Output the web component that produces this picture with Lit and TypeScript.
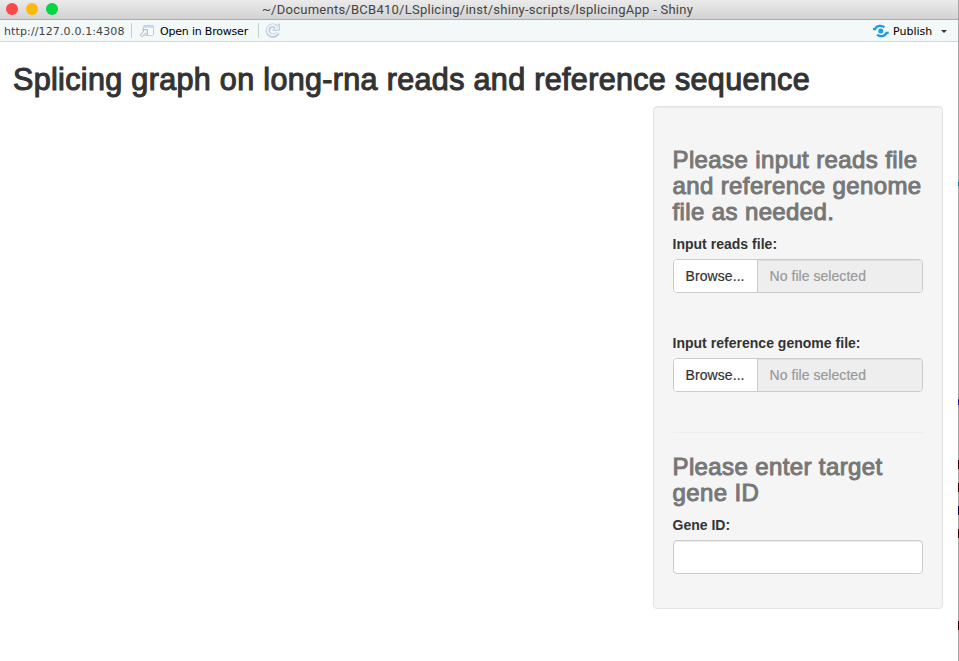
import { LitElement, html, css, svg } from "lit";
import { customElement, property } from "lit/decorators.js";

@customElement("file-field")
class FileField extends LitElement {
  @property() label = "";
  static styles = css`
    :host { display: block; height: 99px; }
    .label { font-weight: 700; height: 20px; line-height: 20px; margin-bottom: 5px; letter-spacing: 0.02px; text-indent: -.5px; }
    .group { display: flex; height: 34px; box-sizing: border-box; border: 1px solid #ccc; border-radius: 4px; overflow: hidden; line-height: 32px; }
    .browse { width: 84px; box-sizing: border-box; padding-left: 11.5px; background: #fff; border-right: 1px solid #ccc; letter-spacing: 0.08px; -webkit-text-stroke: .2px #333; }
    .name { flex: 1; padding-left: 11.5px; background: #eee; color: #999; letter-spacing: 0.05px; -webkit-text-stroke: .2px #999; box-shadow: inset 0 1px 1px rgba(0,0,0,.075); }
  `;
  render() {
    return html`<div class="label">${this.label}</div>
      <div class="group"><div class="browse">Browse...</div><div class="name">No file selected</div></div>`;
  }
}

const newWindowIcon = svg`
  <rect x="4.5" y="1.5" width="10" height="10" rx="1" fill="#f7fbfd" stroke="#bccddc"/>
  <path d="M4.5 2.7H14.5" stroke="#bcdcf4" stroke-width="2.2"/>
  <path d="M3.2 5.5H8.5V10.8L6.8 9.2L3 12.8L1 10.8L4.8 7.1Z" fill="#eef2f6" stroke="#a9b5c2" stroke-width=".9"/>`;
const reloadIcon = svg`
  <path d="M11.3 4A5 5 0 1 0 12.4 9.6" fill="none" stroke="#b7c4d8" stroke-width="4.4"/>
  <path d="M14.3 .9V7.3H7.8L10 5Z" fill="#e8eff8" stroke="#b7c4d8" stroke-width=".9"/>
  <path d="M11.8 4.6A5 5 0 1 0 12 9.4" fill="none" stroke="#e8eff8" stroke-width="2.4"/>`;
const publishIcon = svg`
  <circle cx="7.8" cy="7" r="2.5" fill="#1f9bea"/>
  <path d="M0 5.2H2C3.6 1.4 8.6 .8 11.4 3.4M15.6 8.8H13.6C12 12.6 7 13.2 4.2 10.6" fill="none" stroke="#1f9bea" stroke-width="2.3"/>`;

@customElement("app-root")
class AppRoot extends LitElement {
  static styles = css`
    :host { display: flex; width: 959px; height: 661px; overflow: hidden; background: #fff; font: 14px/20px "Liberation Sans", Arial, sans-serif; color: #333; }
    .window { width: 958px; display: flex; flex-direction: column; }
    .titlebar { height: 19px; flex: none; display: grid; grid-template-columns: 262px 1fr; align-items: center; background: linear-gradient(#ebebeb, #d2d2d2); border-bottom: 1px solid #adadad; }
    .lights { display: flex; gap: 8px; padding-left: 6px; margin-top: -1px; }
    .light { width: 12px; height: 12px; border-radius: 50%; }
    .red { background: #fc4848; } .amber { background: #fdb90b; } .green { background: #04d543; }
    .path { font: 13px/18px Roboto, sans-serif; letter-spacing: .255px; color: #444; white-space: nowrap; }
    .toolbar { height: 21px; flex: none; display: flex; align-items: center; background: #f3f8f9; border-bottom: 1px solid #d2d8db; font: 11px/18px "DejaVu Sans", sans-serif; color: #000; white-space: nowrap; }
    .toolbar span { padding-top: 2px; }
    .toolbar .url { width: 127px; padding-left: 4px; color: #444; letter-spacing: .13px; }
    .sep { width: 1px; height: 15px; background: #c8cdd0; }
    .open { width: 98px; margin-left: 4px; letter-spacing: -.2px; }
    .grow { flex: 1; }
    .publish { margin-left: 4px; width: 48px; }
    .caret { border: 3px solid transparent; border-top-color: #333; border-bottom: 0; margin-right: 11px; margin-top: 1px; }
    .ico { display: block; flex: none; }
    .new-window { margin-left: 7px; }
    .reload { margin-left: 6px; }
    .page { padding: 21px 15px 0 13px; }
    h1, h2 { margin: 0; font-weight: 400; white-space: nowrap; }
    h1 { font-size: 30.5px; line-height: 33px; height: 43px; letter-spacing: .34px; -webkit-text-stroke: 1.1px #333; }
    h2 { font-size: 24px; line-height: 26px; color: #777; margin-bottom: 9px; letter-spacing: .38px; -webkit-text-stroke: 1px #777; margin-left: -.5px; }
    .panel { margin-left: auto; width: 290px; height: 503px; box-sizing: border-box; background: #f5f5f5; border: 1px solid #e3e3e3; border-radius: 4px; padding: 40px 19px 19px; box-shadow: inset 0 1px 1px rgba(0,0,0,.05); }
    .rule { height: 1px; background: #eee; margin-bottom: 21px; }
    .label { font-weight: 700; margin-bottom: 5px; text-indent: -.5px; }
    .entry { height: 34px; box-sizing: border-box; background: #fff; border: 1px solid #ccc; border-radius: 4px; box-shadow: inset 0 1px 1px rgba(0,0,0,.075); }
    .edge { width: 1px; background: linear-gradient(#300, #300) 0 460px / 1px 9px no-repeat, linear-gradient(#300, #300) 0 483px / 1px 9px no-repeat, linear-gradient(#004, #004) 0 506px / 1px 9px no-repeat, linear-gradient(#300, #300) 0 529px / 1px 9px no-repeat, linear-gradient(#300, #300) 0 621px / 1px 9px no-repeat, linear-gradient(#219, #219) 0 399px / 1px 6px no-repeat, linear-gradient(#0878a8, #0878a8) 0 182px / 1px 4px no-repeat, #a5a5a5; }
  `;
  render() {
    return html`
      <div class="window">
        <div class="titlebar">
          <div class="lights"><i class="light red"></i><i class="light amber"></i><i class="light green"></i></div>
          <div class="path">~/Documents/BCB410/LSplicing/inst/shiny-scripts/lsplicingApp - Shiny</div>
        </div>
        <div class="toolbar">
          <span class="url">http://127.0.0.1:4308</span><i class="sep"></i>
          <svg class="ico new-window" width="17" height="14">${newWindowIcon}</svg>
          <span class="open">Open in Browser</span><i class="sep"></i>
          <svg class="ico reload" width="16" height="15">${reloadIcon}</svg>
          <span class="grow"></span>
          <svg class="ico" width="16" height="14">${publishIcon}</svg>
          <span class="publish">Publish</span><i class="caret"></i>
        </div>
        <div class="page">
          <h1>Splicing graph on long-rna reads and reference sequence</h1>
          <div class="panel">
            <h2>Please input reads file<br>and reference genome<br>file as needed.</h2>
            <file-field label="Input reads file:"></file-field>
            <file-field label="Input reference genome file:"></file-field>
            <div class="rule"></div>
            <h2>Please enter target<br>gene ID</h2>
            <div class="label">Gene ID:</div>
            <div class="entry"></div>
          </div>
        </div>
      </div>
      <div class="edge"></div>`;
  }
}
